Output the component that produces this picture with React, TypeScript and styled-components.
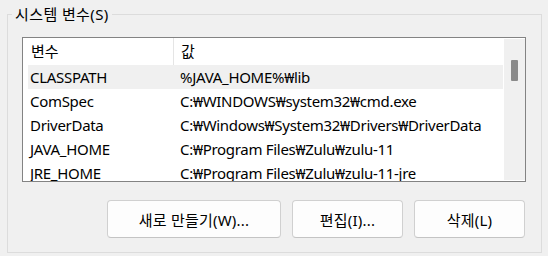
import styled, { createGlobalStyle } from "styled-components";

const GlobalStyle = createGlobalStyle`
  html, body {
    margin: 0;
    padding: 0;
    background: #f0f0f0;
  }
  body {
    font-family: "Noto Sans", "Noto Sans CJK KR", sans-serif;
    font-size: 15px;
    color: #000;
  }
`;

interface Variable {
  name: string;
  value: string;
}

const rows: Variable[] = [
  { name: "CLASSPATH", value: "%JAVA_HOME%₩lib" },
  { name: "ComSpec", value: "C:₩WINDOWS₩system32₩cmd.exe" },
  { name: "DriverData", value: "C:₩Windows₩System32₩Drivers₩DriverData" },
  { name: "JAVA_HOME", value: "C:₩Program Files₩Zulu₩zulu-11" },
  { name: "JRE_HOME", value: "C:₩Program Files₩Zulu₩zulu-11-jre" },
];

export default function App() {
  return (
    <>
      <GlobalStyle />
      <Page>
        <Group>
          <GroupTitle>시스템 변수(S)</GroupTitle>
          <ListView>
            <ListBody>
              <HeaderRow>
                <HeaderCell $first>변수</HeaderCell>
                <HeaderCell>값</HeaderCell>
              </HeaderRow>
              {rows.map((r, i) => (
                <Row key={r.name} $selected={i === 0}>
                  <Cell $first>{r.name}</Cell>
                  <Cell>{r.value}</Cell>
                </Row>
              ))}
            </ListBody>
            <ScrollTrack>
              <ScrollThumb />
            </ScrollTrack>
          </ListView>
          <ButtonRow>
            <Button $wide>새로 만들기(W)...</Button>
            <Button>편집(I)...</Button>
            <Button>삭제(L)</Button>
          </ButtonRow>
        </Group>
      </Page>
    </>
  );
}

const Page = styled.div`
  width: 548px;
  height: 256px;
  box-sizing: border-box;
  padding: 14px 6px 0 7px;
`;

const Group = styled.section`
  position: relative;
  border: 1px solid #dcdcdc;
  padding: 22px 15px 14px 14px;
`;

const GroupTitle = styled.div`
  position: absolute;
  top: -11px;
  left: 4px;
  padding: 0 3px;
  line-height: 20px;
  letter-spacing: 0.4px;
  background: #f0f0f0;
`;

const ListView = styled.div`
  display: grid;
  grid-template-columns: 1fr 21px;
  height: 145px;
  box-sizing: border-box;
  border: 1px solid #838383;
  background: #fff;
  overflow: hidden;
`;

const ListBody = styled.div`
  padding: 0 1px 0 5px;
  overflow: hidden;
`;

const HeaderRow = styled.div`
  display: grid;
  grid-template-columns: 145px 1px 1fr;
  height: 27px;
  line-height: 27px;

  & > :first-child {
    grid-column: 1;
  }
  & > :last-child {
    grid-column: 3;
  }
  &::after {
    content: "";
    grid-column: 2;
    grid-row: 1;
    background: #e5e5e5;
  }
`;

const HeaderCell = styled.div<{ $first?: boolean }>`
  padding-left: ${(p) => (p.$first ? "3px" : "7px")};
  white-space: nowrap;
`;

const Row = styled.div<{ $selected?: boolean }>`
  display: grid;
  grid-template-columns: 146px 1fr;
  height: 24px;
  line-height: 24px;
  background: ${(p) => (p.$selected ? "#f0f0f0" : "transparent")};
`;

const Cell = styled.div<{ $first?: boolean }>`
  padding-left: ${(p) => (p.$first ? "2px" : "6px")};
  letter-spacing: -0.3px;
  white-space: nowrap;
  overflow: hidden;
`;

const ScrollTrack = styled.div`
  margin: 1px 0 1px 0;
  background: #f0f0f0;
  padding: 21px 7px 0 7px;
`;

const ScrollThumb = styled.div`
  height: 21px;
  background: #8a8a8a;
  border-radius: 1px;
`;

const ButtonRow = styled.div`
  display: flex;
  justify-content: flex-end;
  gap: 11px;
  margin-top: 18px;
  padding-right: 1px;
`;

const Button = styled.button<{ $wide?: boolean }>`
  width: ${(p) => (p.$wide ? "174px" : "111px")};
  height: 38px;
  box-sizing: border-box;
  border: 1px solid #d0d0d0;
  border-bottom-color: #c4c4c4;
  border-radius: 4px;
  background: #fdfdfd;
  font-family: "Noto Sans", "Noto Sans CJK KR", sans-serif;
  font-size: 15px;
  letter-spacing: 0.2px;
  color: #000;
  padding: 0;
`;
